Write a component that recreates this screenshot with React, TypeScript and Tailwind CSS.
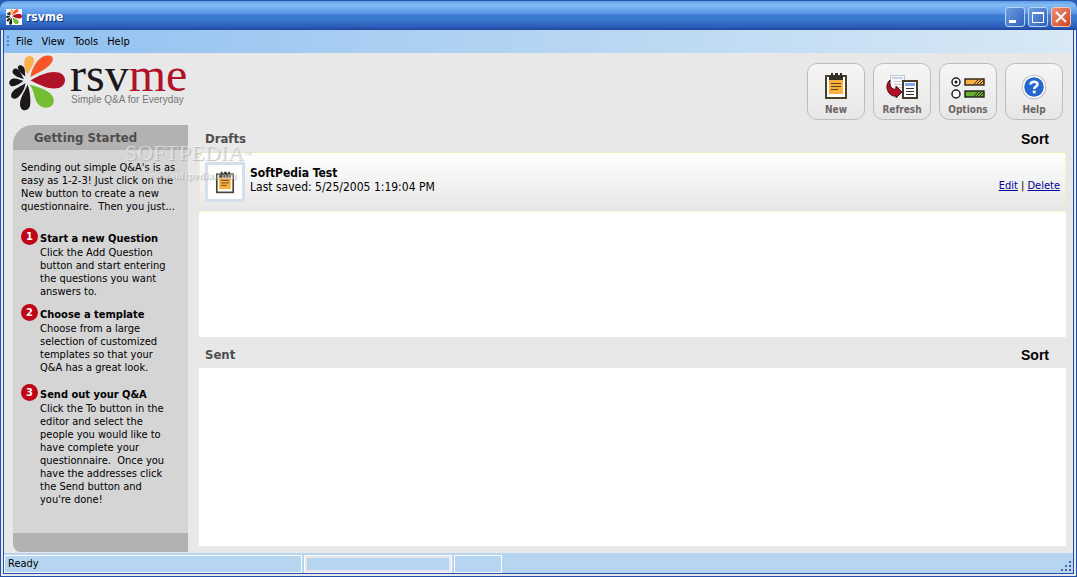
import React from 'react';

const STEPS = [
  {
    title: 'Start a new Question',
    lines: ['Click the Add Question', 'button and start entering', 'the questions you want', 'answers to.'],
    gap: 'mt-[15px]',
  },
  {
    title: 'Choose a template',
    lines: ['Choose from a large', 'selection of customized', 'templates so that your', 'Q&A has a great look.'],
    gap: 'mt-1.5',
  },
  {
    title: 'Send out your Q&A',
    lines: [
      'Click the To button in the',
      'editor and select the',
      'people you would like to',
      'have complete your',
      'questionnaire.  Once you',
      'have the addresses click',
      'the Send button and',
      "you're done!",
    ],
    gap: 'mt-2.5',
  },
];

const Petals: React.FC<{ className?: string }> = ({ className }) => (
  <svg viewBox="0 0 56 56" className={className} aria-hidden="true">
    <path d="M18.5 19.5C15.5 15 14 7 16.5 3C19 0 24.500 0 25 5C25 10 20.500 15 18.500 19.500Z" fill="#fbb14d" />
    <path d="M21.500 22C22 16 27 5 34 1.500C39 -.5 45.500 0 43.500 6C40.500 13 28.500 18 21.500 22Z" fill="#fa5527" />
    <path d="M21.500 25.500C28 21.500 37 17 45 17C52 17 56 20.500 56 25C56 30 52 33.500 45 33.500C37 33.500 29 29 21.500 25.500Z" fill="#b01228" />
    <path d="M20.500 29.500C28 32 42 35 44.500 43.500C46 49 42 53.500 35 52.500C24 50 27 37 20.500 29.500Z" fill="#72bd31" />
    <path d="M18.500 29.500C21 36 22 44 21 51C19 57 11 57 11 49C11 42 16.500 36 18.500 29.500Z" fill="#1b171b" />
    <path d="M16.500 28C16 34 11 42 7 43.500C2.500 44.500 1 41 3 37.500C6 33 12 31.500 16.500 28Z" fill="#1b171b" />
    <path d="M14.500 26C11 28.500 6 32 2 31C-1 29 0 24.500 4 23.500C8 23 11.500 25 14.500 26Z" fill="#1b171b" />
    <path d="M15 24C10 22.500 4.500 21 3.500 17C3.500 13.500 7 12.500 9.500 15C12 17.500 13 21 15 24Z" fill="#1b171b" />
    <path d="M16.500 21.500C13 19 8 15 9 11.500C11 9 14.500 10.500 15.500 13.500C16.500 16.500 15.500 19 16.500 21.500Z" fill="#1b171b" />
  </svg>
);

const ClipboardIcon: React.FC<{ className?: string }> = ({ className }) => (
  <svg viewBox="0 0 24 28" className={className} aria-hidden="true">
    <rect x="2" y="4" width="20" height="22" fill="#fff" stroke="#4a4128" strokeWidth="2" />
    <rect x="5" y="6" width="14" height="16" fill="#fbb040" />
    <path d="M5 8V4L7 3V1H9V3H11V1H14V3H16V1H18V3L19 4V8Z" fill="#332f24" />
    <path d="M7 11.500H17M7 14.500H17M7 17.500H14" stroke="#5b4219" strokeWidth="1" />
  </svg>
);

const RefreshIcon = () => (
  <svg viewBox="0 0 32 26" className="w-8 h-[26px]" aria-hidden="true">
    <rect x="4.500" y="1.500" width="14" height="17" fill="#f8f8f8" stroke="#c3c7cc" />
    <path d="M6 4H17" stroke="#c0d2ee" strokeWidth="2" />
    <path d="M8 7.500H17M8 10.500H17M8 13.500H17" stroke="#cfcfcf" />
    <rect x="17" y="7" width="14" height="17" fill="#fff" stroke="#463b2c" strokeWidth="2" />
    <rect x="19" y="9" width="10" height="3" fill="#82a9ed" />
    <path d="M20 14.500H28M20 17.500H28M20 20.500H28" stroke="#333" />
    <path d="M4 6C-1 10 0 19 7 22H10V24L16 18L10 12V15C6 16 3 12 4 6Z" fill="#b01228" stroke="#521018" />
  </svg>
);

const OptionsIcon = () => (
  <svg viewBox="0 0 36 24" className="w-9 h-6" aria-hidden="true">
    <circle cx="6" cy="6" r="4" fill="#fff" stroke="#222" strokeWidth="1.5" />
    <circle cx="6" cy="6" r="1.5" fill="#111" />
    <circle cx="6" cy="18" r="4" fill="#fff" stroke="#222" strokeWidth="1.5" />
    <rect x="15" y="3" width="19" height="6" fill="#fbb040" stroke="#111" strokeWidth="1.3" />
    <rect x="15" y="15" width="19" height="6" fill="#65b32e" stroke="#111" strokeWidth="1.3" />
    <path d="M24 8L28 4M27 8L31 4M30 8L34 4M24 20L28 16M27 20L31 16M30 20L34 16" stroke="#332b12" />
  </svg>
);

const HelpIcon = () => (
  <svg viewBox="0 0 26 26" className="size-[26px]" aria-hidden="true">
    <circle cx="13" cy="13" r="12.300" fill="#999" opacity=".55" />
    <circle cx="13" cy="13" r="10.500" fill="#2468cf" stroke="#fff" strokeWidth="1.5" />
    <path d="M9.500 10.500C9.800 6.800 16.500 6.800 16.500 10.300C16.500 12.500 13.200 12.500 13.200 15" fill="none" stroke="#fff" strokeWidth="2.6" />
    <rect x="11.800" y="16.500" width="2.800" height="2.800" fill="#fff" />
  </svg>
);

const TOOLS = [
  { label: 'New', icon: <ClipboardIcon className="w-6 h-7" /> },
  { label: 'Refresh', icon: <RefreshIcon /> },
  { label: 'Options', icon: <OptionsIcon /> },
  { label: 'Help', icon: <HelpIcon /> },
];

const TitleBar = () => (
  <header className="h-[30px] shrink-0 flex items-center justify-between px-[6px] pt-[3px] rounded-t-lg border-t border-[#2b55a8] bg-[linear-gradient(to_bottom,#5f9ce8_0px,#84bdf2_4px,#6eaaee_8px,#5592e4_13px,#3a78d2_14px,#3c7cd0_18px,#2b5bb8_26px,#1d3f93_30px)]">
    <div className="flex items-center gap-1">
      <div className="size-4 bg-white">
        <Petals className="size-4" />
      </div>
      <h1 className="text-white font-bold text-xs leading-4 [text-shadow:1px_1px_0_#12307c]">rsvme</h1>
    </div>
    <div className="flex gap-[3px]">
      <button aria-label="Minimize" className="size-5 rounded-[3px] border border-[#b9d3f5] bg-gradient-to-br from-[#6f9de0] to-[#2f62bd] flex items-end p-[3px]">
        <span className="w-[7px] h-[3px] bg-white" />
      </button>
      <button aria-label="Maximize" className="size-5 rounded-[3px] border border-[#b9d3f5] bg-gradient-to-br from-[#6f9de0] to-[#2f62bd] flex items-center justify-center">
        <span className="w-3 h-[11px] border border-t-2 border-white" />
      </button>
      <button aria-label="Close" className="size-5 rounded-[3px] border border-[#f3c6ba] bg-gradient-to-br from-[#ec8f76] to-[#cf3f1c] flex items-center justify-center">
        <svg viewBox="0 0 12 12" className="size-3" aria-hidden="true">
          <path d="M1 1L11 11M11 1L1 11" stroke="#fff" strokeWidth="2" />
        </svg>
      </button>
    </div>
  </header>
);

const MenuBar = () => (
  <nav className="h-[23px] shrink-0 flex items-center pl-[3px] text-[11px] leading-4 bg-gradient-to-r from-[#8fc0f0] to-[#d8e8f4]">
    <svg viewBox="0 0 3 12" className="w-[3px] h-3 mr-[6px]" aria-hidden="true">
      <path d="M0 1H2M0 5H2M0 9H2" stroke="#4f7fc8" strokeWidth="2" />
    </svg>
    <div className="flex gap-[9px]">
      {['File', 'View', 'Tools', 'Help'].map((m) => (
        <button key={m}>{m}</button>
      ))}
    </div>
  </nav>
);

const SectionHead: React.FC<{ title: string }> = ({ title }) => (
  <div className="flex items-center justify-between pl-[6px] pr-[17px] h-[27px]">
    <h2 className="text-[13px] leading-4 font-bold text-[#4d4d4d]">{title}</h2>
    <button className="font-['Liberation_Sans',sans-serif] text-sm leading-4 font-bold">Sort</button>
  </div>
);

const Sidebar = () => (
  <aside className="w-[175px] shrink-0 flex flex-col mb-px bg-[#d5d5d5] rounded-tl-[20px] rounded-bl-lg overflow-hidden">
    <h2 className="h-[25px] shrink-0 bg-[#b2b2b2] pl-[21px] text-[13px] leading-[25px] font-bold text-[#4d4d4d]">Getting Started</h2>
    <div className="flex-1 pl-2 pt-[11px] text-[11px] leading-[13px] whitespace-pre">
      <p>
        Sending out simple Q&amp;A's is as<br />
        easy as 1-2-3! Just click on the<br />
        New button to create a new<br />
        {'questionnaire.  Then you just...'}
      </p>
      {STEPS.map((s, i) => (
        <section key={s.title} className={`flex gap-[2px] ${s.gap}`}>
          <span className="size-[17px] shrink-0 rounded-full bg-[#c00418] text-white font-bold text-center leading-[17px]">{i + 1}</span>
          <div className="pt-[3px]">
            <h3 className="font-bold leading-[15px]">{s.title}</h3>
            <p>
              {s.lines.map((l) => (
                <span key={l} className="block">{l}</span>
              ))}
            </p>
          </div>
        </section>
      ))}
    </div>
    <div className="h-[19px] shrink-0 bg-[#b2b2b2]" />
  </aside>
);

const StatusBar = () => (
  <footer className="h-5 shrink-0 flex items-stretch gap-[2px] pt-[2px] bg-[#b6d5f1] text-[11px] leading-4">
    <div className="w-[298px] border border-white pl-[3px]">Ready</div>
    <div className="w-[148px] border border-white">
      <div className="h-full border-2 border-[#e9e7ec]" />
    </div>
    <div className="w-12 border border-white" />
    <svg viewBox="0 0 11 11" className="size-[11px] ml-auto self-end mr-[2px] mb-px" aria-hidden="true">
      <path d="M9 1H11M5 5H7M9 5H11M1 9H3M5 9H7M9 9H11" stroke="#3f66b5" strokeWidth="2" />
    </svg>
  </footer>
);

const App: React.FC = () => {
  return (
    <div className="h-screen min-h-[570px] flex flex-col bg-[#2d5cb8] text-black font-['DejaVu_Sans_Condensed','DejaVu_Sans',sans-serif]">
      <TitleBar />
      <div className="flex-1 flex flex-col border-x-4 border-b-4 border-double border-[#2450ab] bg-[#e8e8e8]">
        <MenuBar />

        <div className="h-[72px] shrink-0 flex justify-between pl-[5px] pr-[10px]">
          <a href="#home" className="flex pt-[2px] gap-[5px]">
            <Petals className="size-14" />
            <div className="flex flex-col text-[#1b171b]">
              <span className="font-['Liberation_Serif',serif] text-5xl leading-[39px] h-[39px]">
                rsv<span className="text-[#b01228]">me</span>
              </span>
              <span className="pl-px font-['Liberation_Sans',sans-serif] text-[10px] leading-3 text-[#777]">Simple Q&amp;A for Everyday</span>
            </div>
          </a>
          <div className="flex gap-2 pt-[10px]">
            {TOOLS.map((t) => (
              <button key={t.label} className="w-[58px] h-[57px] rounded-[10px] border border-[#bdbdbd] bg-gradient-to-b from-[#f6f6f6] to-[#e6e6e6] flex flex-col items-center gap-[2px]">
                <span className="h-9 flex items-end justify-center">{t.icon}</span>
                <span className="text-[10px] leading-4 font-bold text-[#6b6464]">{t.label}</span>
              </button>
            ))}
          </div>
        </div>

        <div className="flex-1 flex gap-[11px] pl-[9px] pr-[7px]">
          <Sidebar />
          <main className="flex-1 flex flex-col pb-[7px]">
            <SectionHead title="Drafts" />
            <div className="h-[185px] bg-white">
              <article className="h-[60px] flex items-center px-[5px] border border-dotted border-[#eeeea0] bg-gradient-to-b from-white to-[#e6e6e6]">
                <div className="size-10 border-[3px] border-[#d5e0ec] bg-white flex items-center justify-center">
                  <ClipboardIcon className="w-5 h-[23px]" />
                </div>
                <div className="ml-[5px] flex-1 pb-1 text-xs leading-[14px]">
                  <h3 className="font-bold">SoftPedia Test</h3>
                  <p>Last saved: 5/25/2005 1:19:04 PM</p>
                </div>
                <div className="text-[11px] leading-4 pt-2">
                  <a href="#edit" className="text-[#000099] underline">Edit</a>
                  {' | '}
                  <a href="#delete" className="text-[#000099] underline">Delete</a>
                </div>
              </article>
            </div>
            <div className="pt-1">
              <SectionHead title="Sent" />
            </div>
            <div className="flex-1 bg-white" />
          </main>
        </div>
        <StatusBar />
      </div>

      {/* watermark */}
      <div className="absolute left-[125px] top-[141px] pointer-events-none text-white/50 font-['Liberation_Serif',serif] [text-shadow:1px_1px_1px_#9999]">
        <p className="text-[22px] leading-6">SOFTPEDIA<sup className="text-[8px]">™</sup></p>
        <p className="text-[11px] leading-4 pl-5 pt-[2px] font-bold">www.softpedia.com</p>
      </div>
    </div>
  );
};

export default App;
